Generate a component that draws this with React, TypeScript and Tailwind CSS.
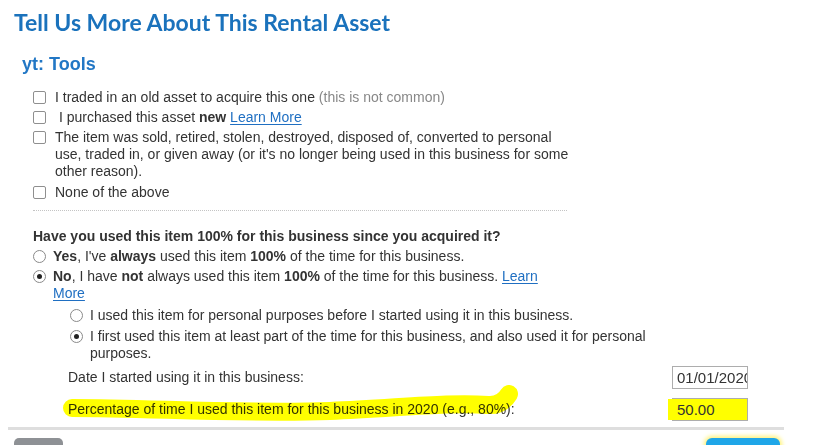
const Box = ({ checked = false }: { checked?: boolean }) => (
  <span className="mt-[2px] w-[13px] h-[13px] shrink-0 border border-[#8f8f8f] rounded-[2px] bg-white">
    {checked && <span className="block w-full h-full bg-[#333]" />}
  </span>
);

const Radio = ({ checked = false }: { checked?: boolean }) => (
  <span className="mt-[2px] w-[13px] h-[13px] shrink-0 rounded-full border border-[#8a8a8a] bg-white flex items-center justify-center">
    {checked && <span className="w-[5px] h-[5px] rounded-full bg-[#222]" />}
  </span>
);

const Link = ({ children }: { children: React.ReactNode }) => (
  <a className="text-[#1f6fc2] underline underline-offset-[2px] cursor-pointer">{children}</a>
);

export default function App() {
  return (
    <div className="relative w-[820px] h-[445px] overflow-hidden bg-white font-['Liberation_Sans',Arial,sans-serif] text-[14px] leading-[17px] text-[#333]">
      {/* highlighter stroke */}
      <svg className="absolute left-0 top-[385px] mix-blend-multiply" width="560" height="45" viewBox="0 385 560 45">
        <path
          d="M72 408 C150 408 240 414 330 411 C400 408 450 402 488 405 C500 406 506 399 509 394"
          fill="none"
          stroke="#ffff00"
          strokeWidth="18"
          strokeLinecap="round"
        />
      </svg>

      <h1 className="pl-[14px] pt-[9px] text-[23px] leading-[26px] font-bold text-[#1a72bc] font-['Lato','Liberation_Sans',sans-serif]">
        Tell Us More About This Rental Asset
      </h1>
      <h2 className="pl-[22px] mt-[18px] text-[18px] leading-[22px] font-bold text-[#2277c5]">yt: Tools</h2>

      {/* checkbox list */}
      <div className="ml-[33px] mt-[14px] flex flex-col gap-[3px]">
        <label className="flex gap-[9px]">
          <Box />
          <span>I traded in an old asset to acquire this one <span className="text-[#888]">(this is not common)</span></span>
        </label>
        <label className="flex gap-[9px]">
          <Box />
          <span>&nbsp;I purchased this asset <b>new</b> <Link>Learn More</Link></span>
        </label>
        <label className="flex gap-[9px]">
          <Box />
          <span className="w-[516px]">
            The item was sold, retired, stolen, destroyed, disposed of, converted to personal use, traded in, or given away (or it's no longer being used in this business for some other reason).
          </span>
        </label>
        <label className="flex gap-[9px] mt-[1px]">
          <Box />
          <span>None of the above</span>
        </label>
      </div>

      <div className="ml-[33px] mt-[9px] w-[534px] border-t border-dotted border-[#c4c4c4]" />

      {/* usage question */}
      <p className="ml-[33px] mt-[17px] font-bold">Have you used this item 100% for this business since you acquired it?</p>
      <div className="ml-[33px] mt-[3px] flex flex-col gap-[3px]">
        <label className="flex gap-[7px]">
          <Radio />
          <span><b>Yes</b>, I've <b>always</b> used this item <b>100%</b> of the time for this business.</span>
        </label>
        <label className="flex gap-[7px]">
          <Radio checked />
          <span className="w-[500px]">
            <b>No</b>, I have <b>not</b> always used this item <b>100%</b> of the time for this business. <Link>Learn More</Link>
          </span>
        </label>
      </div>

      <div className="ml-[70px] mt-[5px] flex flex-col gap-[4px]">
        <label className="flex gap-[7px]">
          <Radio />
          <span>I used this item for personal purposes before I started using it in this business.</span>
        </label>
        <label className="flex gap-[7px]">
          <Radio checked />
          <span className="w-[570px]">
            I first used this item at least part of the time for this business, and also used it for personal purposes.
          </span>
        </label>
      </div>

      {/* date + percentage */}
      <div className="mt-[4px] pl-[68px] pr-[72px] flex flex-col gap-[9px]">
        <div className="flex items-center justify-between h-[23px]">
          <span>Date I started using it in this business:</span>
          <div className="w-[76px] h-[23px] border border-[#adadad] bg-white pl-[4px] text-[15px] leading-[21px] overflow-hidden whitespace-nowrap">
            01/01/2020
          </div>
        </div>
        <div className="flex items-center justify-between h-[23px]">
          <span>Percentage of time I used this item for this business in 2020 (e.g., 80%):</span>
          <div className="relative w-[76px] h-[23px] border border-[#adadad] bg-[#ffff00] pl-[4px] text-[15px] leading-[21px] whitespace-nowrap">
            <span className="absolute left-[-5px] top-0 w-[5px] h-[21px] bg-[#ffff00]" />
            50.00
          </div>
        </div>
      </div>

      <div className="ml-[8px] mt-[6px] w-[776px] h-[3px] bg-[#dedede]" />

      {/* footer buttons */}
      <div className="flex justify-between pl-[14px] pr-[40px] mt-[8px]">
        <button className="w-[49px] h-[30px] rounded-[5px] bg-[#8e9195]" />
        <button className="w-[74px] h-[30px] rounded-[6px] bg-[#1fa6e8] shadow-[0_0_4px_2px_#fff37a]" />
      </div>
    </div>
  );
}
